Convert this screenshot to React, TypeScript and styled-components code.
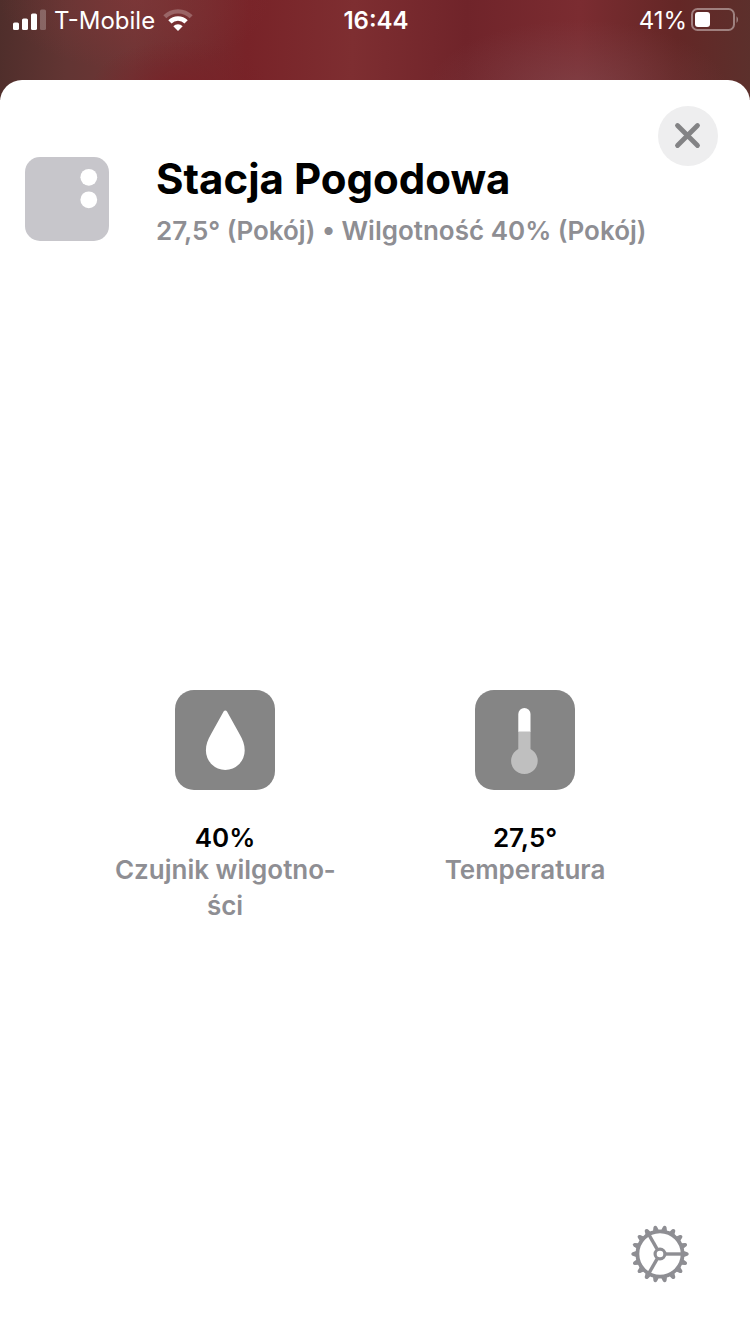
import React from 'react';
import styled, { createGlobalStyle } from 'styled-components';

const GlobalStyle = createGlobalStyle`
  *, *::before, *::after {
    box-sizing: border-box;
  }
  body {
    margin: 0;
    font-family: Inter, "Liberation Sans", sans-serif;
    color: #000;
    background: #fff;
  }
`;

const Screen = styled.div`
  min-height: 100vh;
  display: flex;
  flex-direction: column;
  background:
    radial-gradient(ellipse 20% 70px at 77% 90px, rgba(132, 80, 86, 0.5), transparent),
    radial-gradient(ellipse 12% 50px at 24% 90px, rgba(120, 32, 38, 0.8), transparent),
    radial-gradient(ellipse 18% 70px at 18% 0, rgba(134, 56, 58, 0.5), transparent),
    linear-gradient(
      92deg,
      #4f2e2b 0%,
      #623533 9%,
      #6f3535 18%,
      #782328 33%,
      #7e2e31 47%,
      #70242a 62%,
      #7b2c31 77%,
      #642726 90%,
      #5c302c 100%
    );
  background-size: 100% 100px;
  background-repeat: no-repeat;
`;

const StatusBar = styled.header`
  height: 80px;
  padding: 6px 11px 0 13px;
  display: grid;
  grid-template-columns: 1fr auto 1fr;
  align-items: start;
  color: #fff;
  font-size: 24px;
  line-height: 30px;
`;

const StatusGroup = styled.div<{ $end?: boolean }>`
  display: flex;
  align-items: center;
  justify-content: ${({ $end }) => ($end ? 'flex-end' : 'flex-start')};
  gap: ${({ $end }) => ($end ? '4px' : '8px')};
  height: 30px;
`;

const Clock = styled.time`
  font-weight: 600;
`;

const Sheet = styled.main`
  flex: 1;
  display: flex;
  flex-direction: column;
  background: #fff;
  border-radius: 22px 22px 0 0;
`;

const SheetHeader = styled.section`
  display: flex;
  align-items: flex-start;
  padding: 26px 32px 0 25px;
`;

const DeviceIcon = styled.svg`
  flex: none;
  margin: 51px 47px 0 0;
`;

const Heading = styled.div`
  flex: 1;
  min-width: 0;
  padding-top: 47px;
`;

const Title = styled.h1`
  margin: 0 0 8px;
  font-size: 42px;
  line-height: 52px;
  font-weight: 700;
`;

const Summary = styled.p`
  margin: 0;
  font-size: 26px;
  line-height: 36px;
  font-weight: 600;
  color: #8e8e93;
`;

const IconButton = styled.button`
  flex: none;
  display: grid;
  place-items: center;
  width: 60px;
  height: 60px;
  padding: 0;
  border: 0;
  border-radius: 50%;
  background: transparent;
  cursor: pointer;
`;

const CloseButton = styled(IconButton)`
  background: #eeeeef;
`;

const Body = styled.section`
  flex: 1;
  display: grid;
  grid-template-rows: 3fr auto 2fr;
  padding: 0 10% 6px;
`;

const SensorList = styled.ul`
  grid-row: 2;
  display: grid;
  grid-template-columns: 1fr 1fr;
  margin: 0;
  padding: 0;
  list-style: none;
`;

const Sensor = styled.li`
  display: flex;
  flex-direction: column;
  align-items: center;
  padding: 0 32px;
  text-align: center;
  font-size: 26px;
  font-weight: 600;
`;

const SensorTile = styled.div`
  display: grid;
  place-items: center;
  width: 100px;
  height: 100px;
  margin-bottom: 34px;
  border-radius: 19px;
  background: #858585;
`;

const SensorValue = styled.strong`
  font-weight: 600;
  line-height: 28px;
`;

const SensorName = styled.span`
  line-height: 36px;
  color: #8e8e93;
`;

const SheetFooter = styled.footer`
  display: flex;
  justify-content: flex-end;
  padding: 0 60px 50px;
`;

function SignalBars() {
  return (
    <svg width="33" height="24" viewBox="0 0 33 24" fill="#fff" aria-label="Zasięg">
      <rect x="0" y="13.5" width="6" height="7.5" rx="1.6" />
      <rect x="9" y="9.5" width="6" height="11.5" rx="1.6" />
      <rect x="18" y="4.5" width="6" height="16.5" rx="1.6" />
      <rect x="27" y="0.5" width="6" height="20.5" rx="1.6" opacity="0.25" />
    </svg>
  );
}

function WifiIcon() {
  return (
    <svg width="30" height="24" viewBox="0 0 30 24" fill="none" stroke="#fff" aria-label="Wi-Fi">
      <path d="M1.8 7.8a18.7 18.7 0 0 1 26.4 0" strokeWidth="4.2" opacity="0.25" />
      <path d="M6.9 12.9a11.5 11.5 0 0 1 16.2 0" strokeWidth="4.6" />
      <path d="M15 22l-4.7-4.7a6.7 6.7 0 0 1 9.4 0z" fill="#fff" stroke="none" />
    </svg>
  );
}

function BatteryIcon() {
  return (
    <svg width="48" height="26" viewBox="0 0 48 26" aria-label="Bateria">
      <rect x="1" y="1" width="42" height="21" rx="5.5" fill="none" stroke="#fff" strokeWidth="2" opacity="0.4" />
      <rect x="4" y="4" width="15" height="15" rx="3" fill="#fff" />
      <path d="M45.5 8.2c2 1.4 2 5.2 0 6.8z" fill="#fff" opacity="0.4" />
    </svg>
  );
}

function DropIcon() {
  return (
    <svg width="100" height="100" viewBox="-1 0 100 100" fill="#fff" aria-hidden="true">
      <path d="M47.6 21.6c.8-1.4 2.6-1.4 3.4 0L63.5 44c3.4 6 5.2 10.5 5.2 16.5A19.4 19.4 0 0 1 29.9 60.5C29.9 54.5 31.7 50 35.1 44z" />
    </svg>
  );
}

function ThermometerIcon() {
  return (
    <svg width="100" height="100" viewBox="-1 0 100 100" aria-hidden="true">
      <path d="M42.3 42V24a6.1 6.1 0 0 1 12.2 0v18z" fill="#fff" />
      <path d="M42.3 41.5h12.2v17.5a13.3 13.3 0 1 1-12.2 0z" fill="#bfbfbf" />
    </svg>
  );
}

const TEETH = Array.from({ length: 18 }, (_, i) => i * 20);
const SPOKES = [0, 120, 240];

function GearIcon() {
  return (
    <svg width="60" height="60" viewBox="-30 -30 60 60" fill="none" stroke="#8e8e93" aria-hidden="true">
      <circle r="22.6" strokeWidth="3.8" />
      <circle r="4.9" strokeWidth="3.2" />
      {SPOKES.map((angle) => (
        <path key={angle} d="M6 0H22" strokeWidth="3.4" transform={`rotate(${angle})`} />
      ))}
      {TEETH.map((angle) => (
        <path
          key={angle}
          d="M23.8 -2.9L27.4 -1.8Q28.7 -1.2 28.7 0T27.4 1.8L23.8 2.9z"
          fill="#8e8e93"
          stroke="none"
          transform={`rotate(${angle})`}
        />
      ))}
    </svg>
  );
}

const sensors = [
  { value: '40%', name: 'Czujnik wilgotno\u00ADści', Icon: DropIcon },
  { value: '27,5°', name: 'Temperatura', Icon: ThermometerIcon },
];

export default function App() {
  return (
    <Screen lang="pl">
      <GlobalStyle />
      <StatusBar>
        <StatusGroup>
          <SignalBars />
          <span>T-Mobile</span>
          <WifiIcon />
        </StatusGroup>
        <Clock>16:44</Clock>
        <StatusGroup $end>
          <span>41%</span>
          <BatteryIcon />
        </StatusGroup>
      </StatusBar>

      <Sheet>
        <SheetHeader>
          <DeviceIcon width="84" height="84" viewBox="0 0 84 84" aria-hidden="true">
            <rect width="84" height="84" rx="15" fill="#c7c6cb" />
            <circle cx="63.8" cy="20.3" r="8.4" fill="#fff" />
            <circle cx="63.8" cy="42.8" r="8.4" fill="#fff" />
          </DeviceIcon>
          <Heading>
            <Title>Stacja Pogodowa</Title>
            <Summary>27,5° (Pokój) • Wilgotność 40% (Pokój)</Summary>
          </Heading>
          <CloseButton type="button" aria-label="Zamknij">
            <svg width="30" height="30" viewBox="0 0 30 30" stroke="#838385" strokeWidth="4.8" strokeLinecap="round" aria-hidden="true">
              <path d="M4.5 4.5l20 20M24.5 4.5l-20 20" />
            </svg>
          </CloseButton>
        </SheetHeader>

        <Body>
          <SensorList>
            {sensors.map(({ value, name, Icon }) => (
              <Sensor key={name}>
                <SensorTile>
                  <Icon />
                </SensorTile>
                <SensorValue>{value}</SensorValue>
                <SensorName>{name}</SensorName>
              </Sensor>
            ))}
          </SensorList>
        </Body>

        <SheetFooter>
          <IconButton type="button" aria-label="Ustawienia">
            <GearIcon />
          </IconButton>
        </SheetFooter>
      </Sheet>
    </Screen>
  );
}
